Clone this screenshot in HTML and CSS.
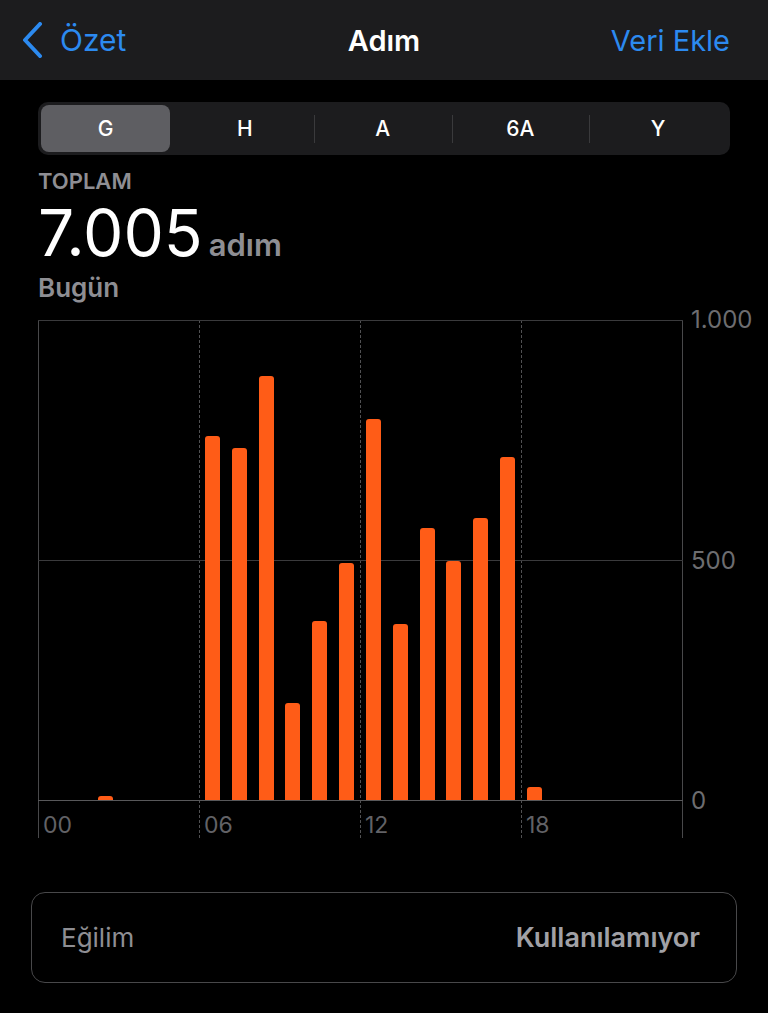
FILE: index.html
```html
<!DOCTYPE html>
<html lang="tr">
<head>
    <meta charset="utf-8">
    <title>Adım</title>
    <link rel="stylesheet" href="styles.css">
</head>
<body>
    <header class="nav-bar">
        <a class="nav-back" href="#">
            <svg class="chevron" width="22" height="36" viewBox="0 0 22 36">
                <path d="M19 2 L4 18 L19 34" />
            </svg>
            <span>Özet</span>
        </a>
        <h1 class="nav-title">Adım</h1>
        <a class="nav-action" href="#">Veri Ekle</a>
    </header>

    <main class="content">
        <div class="segments">
            <button class="segment selected">G</button>
            <button class="segment">H</button>
            <button class="segment sep">A</button>
            <button class="segment sep">6A</button>
            <button class="segment sep">Y</button>
        </div>

        <div class="summary">
            <div class="summary-label">TOPLAM</div>
            <div class="summary-value">7.005<span class="summary-unit">adım</span></div>
            <div class="summary-date">Bugün</div>
        </div>

        <!-- hourly steps, 0 - 1.000 scale -->
        <div class="chart">
            <div class="chart-cols">
                <div class="col"></div>
                <div class="col dashed"></div>
                <div class="col dashed"></div>
                <div class="col dashed last"></div>
            </div>
            <div class="chart-rows">
                <div class="row"></div>
                <div class="row"></div>
            </div>
            <div class="bars">
                <div class="slot"></div>
                <div class="slot"></div>
                <div class="slot"><div class="bar" style="height: 0.9%"></div></div>
                <div class="slot"></div>
                <div class="slot"></div>
                <div class="slot"></div>
                <div class="slot"><div class="bar" style="height: 75.8%"></div></div>
                <div class="slot"><div class="bar" style="height: 73.3%"></div></div>
                <div class="slot"><div class="bar" style="height: 88.3%"></div></div>
                <div class="slot"><div class="bar" style="height: 20.2%"></div></div>
                <div class="slot"><div class="bar" style="height: 37.3%"></div></div>
                <div class="slot"><div class="bar" style="height: 49.4%"></div></div>
                <div class="slot"><div class="bar" style="height: 79.3%"></div></div>
                <div class="slot"><div class="bar" style="height: 36.7%"></div></div>
                <div class="slot"><div class="bar" style="height: 56.7%"></div></div>
                <div class="slot"><div class="bar" style="height: 49.8%"></div></div>
                <div class="slot"><div class="bar" style="height: 58.8%"></div></div>
                <div class="slot"><div class="bar" style="height: 71.4%"></div></div>
                <div class="slot"><div class="bar" style="height: 2.7%"></div></div>
                <div class="slot"></div>
                <div class="slot"></div>
                <div class="slot"></div>
                <div class="slot"></div>
                <div class="slot"></div>
            </div>
            <div class="x-labels">
                <span>00</span>
                <span>06</span>
                <span>12</span>
                <span>18</span>
            </div>
            <div class="y-labels">
                <span>1.000</span>
                <span>500</span>
                <span>0</span>
            </div>
        </div>

        <div class="trend-card">
            <span class="trend-label">Eğilim</span>
            <span class="trend-value">Kullanılamıyor</span>
        </div>
    </main>
</body>
</html>
```

FILE: styles.css
```css
body {
    margin: 0;
    background-color: #000;
    color: #fff;
    font-family: Inter, "Noto Sans", sans-serif;
}

/* top bar */
.nav-bar {
    display: grid;
    grid-template-columns: 1fr auto 1fr;
    align-items: center;
    height: 80px;
    padding: 0 38px;
    background-color: #1c1c1e;
}

.nav-back {
    display: flex;
    align-items: center;
    gap: 17px;
    margin-left: -17px;
    color: #2c8af0;
    text-decoration: none;
    font-size: 30px;
}

.chevron path {
    fill: none;
    stroke: #2c8af0;
    stroke-width: 4;
    stroke-linecap: round;
    stroke-linejoin: round;
}

.nav-title {
    margin: 0;
    font-size: 29px;
    font-weight: 600;
}

.nav-action {
    justify-self: end;
    color: #2c8af0;
    text-decoration: none;
    font-size: 29px;
}

.content {
    padding: 22px 38px 0;
}

/* G / H / A / 6A / Y */
.segments {
    display: flex;
    height: 53px;
    box-sizing: border-box;
    padding: 3px;
    background-color: #1c1c1e;
    border-radius: 10px;
}

.segment {
    flex: 1;
    border: 0;
    background: none;
    color: #fff;
    font-family: inherit;
    font-size: 21px;
    font-weight: 500;
    border-radius: 8px;
}

.segment.sep {
    background: linear-gradient(#3a3a3c, #3a3a3c) left center / 1px 28px no-repeat;
}

.segment.selected {
    flex: 0 0 129px;
    margin-right: 6px;
    background-color: #5e5e62;
}

/* totals */
.summary {
    margin-top: 13px;
    color: #8e8e93;
}

.summary-label {
    font-size: 22px;
    line-height: 26px;
    font-weight: 600;
}

.summary-value {
    margin-top: 6px;
    color: #fff;
    font-size: 64px;
    line-height: 66px;
}

.summary-unit {
    margin-left: 6px;
    color: #8e8e93;
    font-size: 31px;
    font-weight: 600;
}

.summary-date {
    margin-top: -5px;
    font-size: 26px;
    line-height: 30px;
    font-weight: 600;
}

/* chart */
.chart {
    display: grid;
    grid-template-columns: 645px 1fr;
    grid-template-rows: 481px 37px;
    margin-top: 17px;
}

.chart-cols {
    grid-column: 1;
    grid-row: 1 / span 2;
    display: grid;
    grid-template-columns: 161px 161px 161px 162px;
}

.col {
    border-left: 1px solid #48484a;
}

.col.dashed {
    border-left: 1px dashed #505052;
}

.col.last {
    border-right: 1px solid #48484a;
}

.chart-rows {
    grid-column: 1;
    grid-row: 1;
    display: grid;
    grid-template-rows: 240px 240px;
    border-top: 1px solid #3a3a3c;
}

.row {
    border-bottom: 1px solid #3a3a3c;
}

.row:last-child {
    border-bottom-color: #58585a;
}

.bars {
    grid-column: 1;
    grid-row: 1;
    display: grid;
    grid-template-columns: repeat(24, 1fr);
    padding: 0 1px 1px 0;
}

.slot {
    display: flex;
    justify-content: center;
    align-items: flex-end;
}

.bar {
    width: 15px;
    background-color: #ff5c17;
    border-radius: 3px 3px 0 0;
}

.x-labels {
    grid-column: 1;
    grid-row: 2;
    display: grid;
    grid-template-columns: 161px 161px 161px 162px;
    padding-top: 12px;
    color: #626266;
    font-size: 23px;
    line-height: 24px;
}

.x-labels span {
    padding-left: 5px;
}

.y-labels {
    grid-column: 2;
    grid-row: 1;
    display: flex;
    flex-direction: column;
    justify-content: space-between;
    margin: -12px 0;
    padding-left: 8px;
    color: #6d6d70;
    font-size: 24px;
    line-height: 24px;
    white-space: nowrap;
}

/* trend */
.trend-card {
    display: flex;
    justify-content: space-between;
    align-items: center;
    height: 91px;
    box-sizing: border-box;
    margin: 54px -7px 0;
    padding: 0 36px 0 29px;
    border: 1.5px solid #48484a;
    border-radius: 14px;
    font-size: 26px;
}

.trend-label {
    color: #8e8e93;
}

.trend-value {
    color: #a1a1a6;
    font-size: 27px;
    font-weight: 600;
}
```
